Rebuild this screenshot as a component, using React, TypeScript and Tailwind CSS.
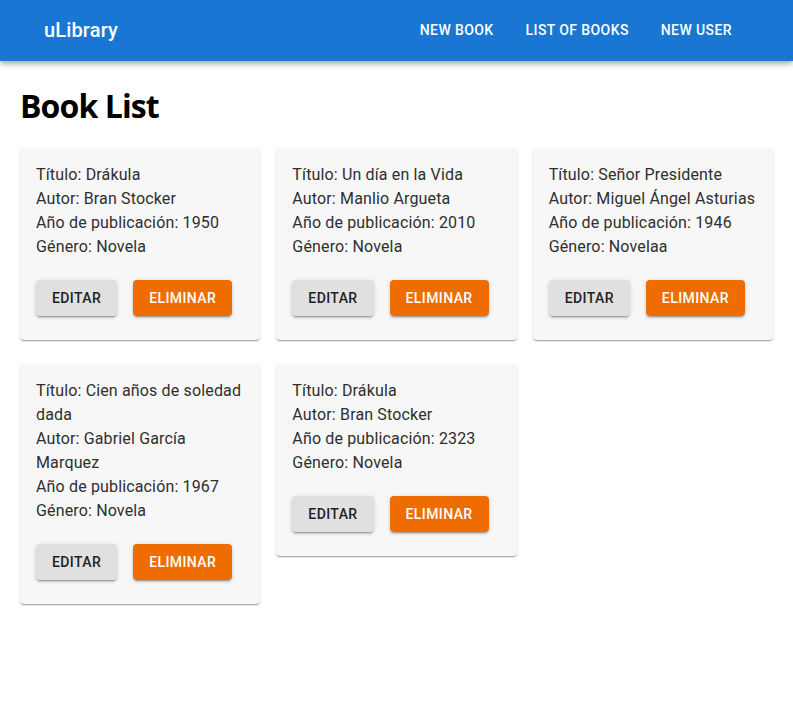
const books = [
  { id: 1, titulo: "Drákula", autor: "Bran Stocker", anio: 1950, genero: "Novela" },
  { id: 2, titulo: "Un día en la Vida", autor: "Manlio Argueta", anio: 2010, genero: "Novela" },
  { id: 3, titulo: "Señor Presidente", autor: "Miguel Ángel Asturias", anio: 1946, genero: "Novelaa" },
  { id: 4, titulo: "Cien años de soledad dada", autor: "Gabriel García Marquez", anio: 1967, genero: "Novela" },
  { id: 5, titulo: "Drákula", autor: "Bran Stocker", anio: 2323, genero: "Novela" },
];

const roboto = "font-['Roboto','Liberation_Sans',sans-serif]";

export default function App() {
  return (
    <div className={`min-h-screen bg-white ${roboto}`}>
      {/* NAVBAR */}
      <header className="h-[61px] bg-[#1976d2] text-white flex items-center pl-[44px] pr-[45px] pb-[2px] shadow-[0_2px_4px_-1px_rgba(0,0,0,0.2),0_4px_5px_0_rgba(0,0,0,0.14),0_1px_10px_0_rgba(0,0,0,0.12)] relative z-10">
        <h6 className="text-[20px] font-medium tracking-[0.15px] flex-1 leading-none">uLibrary</h6>
        <nav className="flex">
          {["NEW BOOK", "LIST OF BOOKS", "NEW USER"].map((item) => (
            <button key={item} className="px-4 py-[6px] text-[14px] font-medium tracking-[0.4px] leading-[24px]">
              {item}
            </button>
          ))}
        </nav>
      </header>

      <main className="px-[20px]">
        <h1 className="font-['Open_Sans',sans-serif] font-bold text-[32px] leading-none mt-[29px] mb-[26px] text-black tracking-[-0.9px]">
          Book List
        </h1>
        <div className="grid grid-cols-3 gap-x-4 gap-y-6 items-start">
          {books.map((book) => (
            <BookCard key={book.id} book={book} />
          ))}
        </div>
      </main>
    </div>
  );
}

function BookCard({ book }: { book: (typeof books)[0] }) {
  return (
    <div className="bg-[#f7f7f7] rounded-[4px] shadow-[0_2px_1px_-1px_rgba(0,0,0,0.2),0_1px_1px_0_rgba(0,0,0,0.14),0_1px_3px_0_rgba(0,0,0,0.12)] pt-[15px] px-4 pb-6">
      <div className="text-[16px] leading-[24px] text-[#2e2e2e] tracking-[0.15px]">
        <p>Título: {book.titulo}</p>
        <p>Autor: {book.autor}</p>
        <p>Año de publicación: {book.anio}</p>
        <p>Género: {book.genero}</p>
      </div>
      <div className="flex gap-4 mt-[21px]">
        <button className="h-9 px-4 rounded-[4px] bg-[#e0e0e0] text-[#222] text-[14px] font-medium tracking-[0.4px] shadow-[0_3px_1px_-2px_rgba(0,0,0,0.2),0_2px_2px_0_rgba(0,0,0,0.14),0_1px_5px_0_rgba(0,0,0,0.12)]">
          EDITAR
        </button>
        <button className="h-9 px-4 rounded-[4px] bg-[#ef6c00] text-white text-[14px] font-medium tracking-[0.4px] shadow-[0_3px_1px_-2px_rgba(0,0,0,0.2),0_2px_2px_0_rgba(0,0,0,0.14),0_1px_5px_0_rgba(0,0,0,0.12)]">
          ELIMINAR
        </button>
      </div>
    </div>
  );
}
